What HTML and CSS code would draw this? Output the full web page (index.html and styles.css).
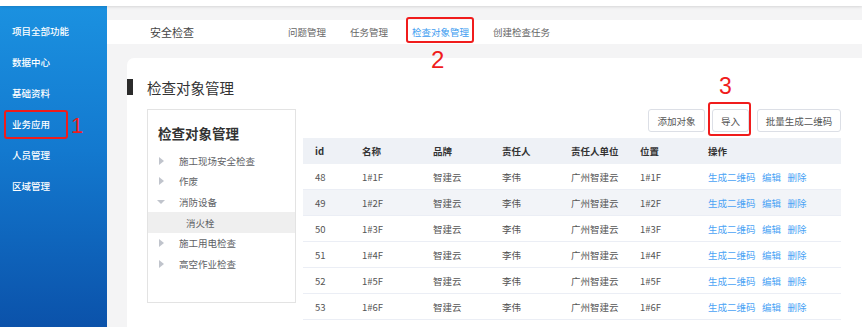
FILE: index.html
```html
<!DOCTYPE html>
<html lang="zh-CN">
<head>
<meta charset="utf-8">
<title>检查对象管理</title>
<link rel="stylesheet" href="styles.css">
</head>
<body>
<div class="topstrip"></div>
<div class="layout">
  <aside class="sidebar">
    <div class="side-item">项目全部功能</div>
    <div class="side-item">数据中心</div>
    <div class="side-item">基础资料</div>
    <div class="side-item">业务应用</div>
    <div class="side-item">人员管理</div>
    <div class="side-item">区域管理</div>
  </aside>
  <main class="main">
    <header class="header">
      <div class="header-title">安全检查</div>
      <nav class="nav">
        <span class="nav-item">问题管理</span>
        <span class="nav-item">任务管理</span>
        <span class="nav-item active">检查对象管理</span>
        <span class="nav-item">创建检查任务</span>
      </nav>
    </header>
    <section class="card">
      <h1 class="page-title"><span class="title-bar"></span>检查对象管理</h1>
      <div class="content">
        <div class="tree">
          <div class="tree-title">检查对象管理</div>
          <div class="tree-item"><span class="tri-right"></span>施工现场安全检查</div>
          <div class="tree-item"><span class="tri-right"></span>作废</div>
          <div class="tree-item"><span class="tri-down"></span>消防设备</div>
          <div class="tree-item child selected">消火栓</div>
          <div class="tree-item"><span class="tri-right"></span>施工用电检查</div>
          <div class="tree-item"><span class="tri-right"></span>高空作业检查</div>
        </div>
        <div class="right">
          <div class="toolbar">
            <button class="btn b-add">添加对象</button>
            <button class="btn b-imp">导入</button>
            <button class="btn b-qr">批量生成二维码</button>
          </div>
          <div class="table">
            <div class="row head">
              <div class="c c1">id</div><div class="c c2">名称</div><div class="c c3">品牌</div><div class="c c4">责任人</div><div class="c c5">责任人单位</div><div class="c c6">位置</div><div class="c c7">操作</div>
            </div>
            <div class="row">
              <div class="c c1">48</div><div class="c c2">1#1F</div><div class="c c3">智建云</div><div class="c c4">李伟</div><div class="c c5">广州智建云</div><div class="c c6">1#1F</div><div class="c c7"><a class="lk">生成二维码</a><a class="lk">编辑</a><a class="lk">删除</a></div>
            </div>
            <div class="row stripe">
              <div class="c c1">49</div><div class="c c2">1#2F</div><div class="c c3">智建云</div><div class="c c4">李伟</div><div class="c c5">广州智建云</div><div class="c c6">1#2F</div><div class="c c7"><a class="lk">生成二维码</a><a class="lk">编辑</a><a class="lk">删除</a></div>
            </div>
            <div class="row">
              <div class="c c1">50</div><div class="c c2">1#3F</div><div class="c c3">智建云</div><div class="c c4">李伟</div><div class="c c5">广州智建云</div><div class="c c6">1#3F</div><div class="c c7"><a class="lk">生成二维码</a><a class="lk">编辑</a><a class="lk">删除</a></div>
            </div>
            <div class="row">
              <div class="c c1">51</div><div class="c c2">1#4F</div><div class="c c3">智建云</div><div class="c c4">李伟</div><div class="c c5">广州智建云</div><div class="c c6">1#4F</div><div class="c c7"><a class="lk">生成二维码</a><a class="lk">编辑</a><a class="lk">删除</a></div>
            </div>
            <div class="row">
              <div class="c c1">52</div><div class="c c2">1#5F</div><div class="c c3">智建云</div><div class="c c4">李伟</div><div class="c c5">广州智建云</div><div class="c c6">1#5F</div><div class="c c7"><a class="lk">生成二维码</a><a class="lk">编辑</a><a class="lk">删除</a></div>
            </div>
            <div class="row">
              <div class="c c1">53</div><div class="c c2">1#6F</div><div class="c c3">智建云</div><div class="c c4">李伟</div><div class="c c5">广州智建云</div><div class="c c6">1#6F</div><div class="c c7"><a class="lk">生成二维码</a><a class="lk">编辑</a><a class="lk">删除</a></div>
            </div>
            <div class="row"></div>
          </div>
        </div>
      </div>
    </section>
  </main>
</div>

<div class="mark box1"></div>
<div class="num n1">1</div>
<div class="mark box2"></div>
<div class="num n2">2</div>
<div class="mark box3"></div>
<div class="num n3">3</div>
</body>
</html>
```

FILE: styles.css
```css
* { box-sizing: border-box; }
html, body {
  margin: 0;
  padding: 0;
  width: 862px;
  height: 327px;
  overflow: hidden;
  background: #ffffff;
  font-family: "Noto Sans CJK SC", "Noto Sans", sans-serif;
  color: #333;
}
.topstrip {
  height: 6px;
  background: #ffffff;
  box-shadow: 0 1px 3px rgba(0,0,0,0.12);
  position: relative;
  z-index: 2;
}
.layout {
  display: flex;
  height: 321px;
}
.sidebar {
  width: 107px;
  flex: none;
  background: linear-gradient(180deg, #1b91e0 0%, #1379cf 45%, #0b52aa 100%);
  padding-top: 10px;
}
.side-item {
  color: #ffffff;
  font-size: 9.5px;
  line-height: 31px;
  padding-left: 12px;
  font-weight: 500;
}
.main {
  flex: 1;
  background: #f4f4f5;
  padding-top: 14px;
  overflow: hidden;
}
.header {
  height: 24px;
  background: #ffffff;
  display: flex;
  align-items: center;
  padding-left: 43px;
}
.header-title {
  font-size: 11px;
  color: #444;
  width: 138px;
}
.nav {
  display: flex;
  gap: 24px;
}
.nav-item {
  font-size: 9.5px;
  color: #666;
}
.nav-item.active { color: #3c9cf0; }
.card {
  margin: 14px 0 0 20px;
  background: #ffffff;
  border-top-left-radius: 7px;
  height: 300px;
  padding-top: 21px;
}
.page-title {
  margin: 0;
  display: flex;
  align-items: center;
  height: 16px;
  font-size: 14.5px;
  font-weight: 400;
  color: #333;
}
.title-bar {
  width: 6px;
  height: 16px;
  background: #2b2b2b;
  margin-right: 14px;
}
.content {
  display: flex;
  margin-top: 14px;
  padding-left: 20px;
  gap: 7px;
}
.tree {
  width: 149px;
  height: 194px;
  flex: none;
  border: 1px solid #e3e3e3;
  padding-top: 13px;
}
.tree-title {
  font-size: 13.5px;
  font-weight: 700;
  line-height: 20px;
  padding-left: 10px;
  color: #333;
  margin-bottom: 7.5px;
}
.tree-item {
  height: 20.6px;
  display: flex;
  align-items: center;
  font-size: 9.5px;
  color: #606266;
  padding-left: 10px;
}
.tree-item.child { padding-left: 38px; }
.tree-item.selected { background: #efefef; }
.tri-right {
  width: 0; height: 0;
  border-top: 4px solid transparent;
  border-bottom: 4px solid transparent;
  border-left: 5px solid #c0c4cc;
  margin-left: 1px;
  margin-right: 15px;
}
.tri-down {
  width: 0; height: 0;
  border-left: 4px solid transparent;
  border-right: 4px solid transparent;
  border-top: 4px solid #c0c4cc;
  margin-left: -1px;
  margin-right: 14px;
}
.right {
  width: 538px;
  flex: none;
}
.toolbar {
  display: flex;
  justify-content: flex-end;
  height: 23px;
  margin-bottom: 6px;
}
.btn {
  height: 23px;
  border: 1px solid #dcdfe6;
  border-radius: 3px;
  background: #ffffff;
  font-family: "Noto Sans CJK SC", "Noto Sans", sans-serif;
  font-size: 9.5px;
  color: #555;
  padding: 0;
  text-align: center;
}
.b-add { width: 57px; margin-right: 7px; }
.b-imp { width: 37px; margin-right: 8px; }
.b-qr { width: 84px; }
.table { width: 538px; }
.row {
  display: flex;
  height: 26px;
  border-bottom: 1px solid #ebeef5;
  background: #ffffff;
  align-items: center;
}
.row.head {
  background: #eef1f6;
  border-bottom: none;
}
.row.stripe { background: #f2f4f8; }
.c {
  font-size: 9.5px;
  color: #555;
  padding-left: 12px;
  white-space: nowrap;
}
.row.head .c { font-weight: 700; color: #333; }
.c1 { width: 47px; }
.c2 { width: 71px; }
.c3 { width: 69px; }
.c4 { width: 69px; }
.c5 { width: 69px; }
.c6 { width: 68px; }
.c7 { width: 145px; }
.lk {
  color: #4ba3f5;
  margin-right: 6.5px;
}

.mark {
  position: absolute;
  border: 2px solid #f01c1c;
  border-radius: 3px;
}
.box1 { left: 4px; top: 110px; width: 64px; height: 29px; }
.box2 { left: 406px; top: 17px; width: 68px; height: 26px; }
.box3 { left: 708px; top: 102px; width: 43px; height: 34px; }
.num {
  position: absolute;
  color: #f01c1c;
  font-family: "Liberation Sans", Arial, sans-serif;
  line-height: 1;
}
.n1 { left: 71px; top: 115px; font-size: 22px; }
.n2 { left: 431px; top: 48px; font-size: 24px; }
.n3 { left: 719px; top: 75px; font-size: 23px; }
```
